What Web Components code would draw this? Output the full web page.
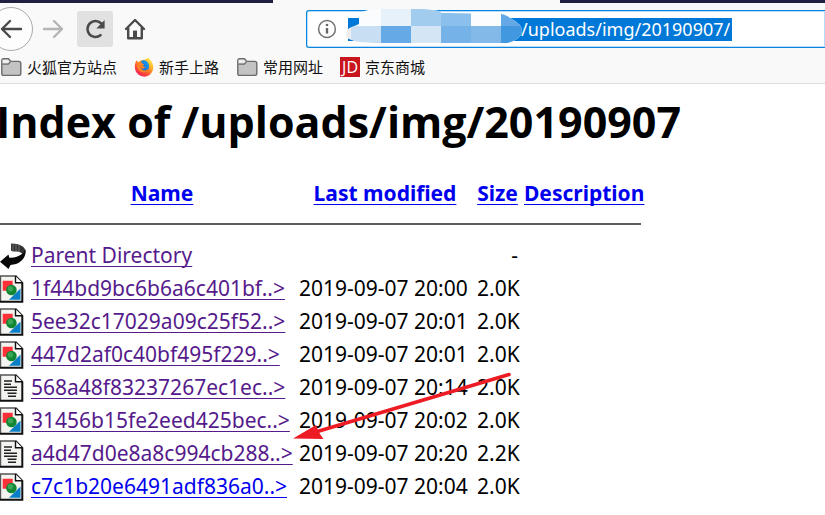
<!DOCTYPE html>
<html lang="zh-CN">
<head>
<meta charset="utf-8">
<title>Index of /uploads/img/20190907</title>
<style>
body{margin:0;background:#fff;color:#000;font-family:"Noto Sans","Noto Sans CJK SC",sans-serif;overflow-x:hidden}
</style>
</head>
<body>
<browser-chrome></browser-chrome>
<directory-index path="/uploads/img/20190907"></directory-index>
<script>
const define = (name, html, setup) => customElements.define(name, class extends HTMLElement {
  constructor() {
    super();
    this.attachShadow({mode: 'open'}).innerHTML = html;
  }
  connectedCallback() { if (setup) setup(this, this.shadowRoot); }
});

const icons = {
  back: '<svg width="24" height="24" viewBox="0 0 24 24" fill="none" stroke="#4a4a4a" stroke-width="2.4" stroke-linecap="round" stroke-linejoin="round"><path d="M22 12H3M11 4L3 12l8 8"/></svg>',
  forward: '<svg width="24" height="24" viewBox="0 0 24 24" fill="none" stroke="#b5b5b5" stroke-width="2.4" stroke-linecap="round" stroke-linejoin="round"><path d="M3 12h18M13 4l8 8-8 8"/></svg>',
  reload: '<svg width="24" height="24" viewBox="0 0 24 24" fill="none" stroke="#4a4a4a" stroke-width="2.6" stroke-linecap="round"><path d="M17.5 18.2A8 8 0 1 1 18 6.2"/><path d="M21.6 3v8.4h-8.2z" fill="#4a4a4a" stroke="none"/></svg>',
  home: '<svg width="24" height="24" viewBox="0 0 24 24" fill="none" stroke="#4a4a4a" stroke-width="2.4" stroke-linecap="round" stroke-linejoin="round"><path d="M3 12l9-9 9 9M5.2 11v10.2h13.6V11"/><path d="M10 21v-7.4h4V21z" fill="#4a4a4a" stroke="none"/></svg>',
  info: '<svg width="20" height="20" viewBox="0 0 20 20"><circle cx="10" cy="10" r="8.4" fill="none" stroke="#737373" stroke-width="1.5"/><circle cx="10" cy="6" r="1.3" fill="#666"/><path d="M10 9v5.6" stroke="#666" stroke-width="2.4"/></svg>',
  folder: '<svg width="22" height="20" viewBox="0 0 22 20"><path d="M1.8 16.5V3.6Q1.8 1.8 3.6 1.8h4.8l2.4 2.6h8q2 0 2 2v10.200q0 1.800-1.800 1.800H3.600q-1.800 0-1.800-1.900z" fill="#c3c3c3" stroke="#6b6b6b" stroke-width="1.4"/><path d="M2.600 6.200V2.700h5.300l1.700 1.700-1.700 1.800z" fill="#eee"/><path d="M2.500 7.200h5.800l2-2.200" fill="none" stroke="#6b6b6b" stroke-width="1.200"/></svg>',
  firefox: '<svg width="20" height="20" viewBox="0 0 20 20"><defs><linearGradient id="f" x1=".9" y1="0" x2=".2" y2="1"><stop offset="0" stop-color="#fff44f"/><stop offset=".35" stop-color="#ffb52b"/><stop offset=".65" stop-color="#ff5a30"/><stop offset="1" stop-color="#ef1260"/></linearGradient><linearGradient id="b" x1="0" y1="1" x2="1" y2="0"><stop offset="0" stop-color="#0759c9"/><stop offset="1" stop-color="#24a7f2"/></linearGradient></defs><path d="M2.500 3.300l1.700 2C7 2.300 9 3 11 2.400L14.500.7c1 1.500 1.700 2.300 2.800 3.500 3.300 5 2.200 9.800-.8 12.800-4 4-10 3.200-13.300-.7C.1 12.700.2 7.500 2.500 3.300z" fill="url(#f)"/><path d="M7 4c3.500-1.800 7.200.2 8 4 .6 4-2 6.700-5 6.600-3-.1-4.600-2.100-4.400-4.400 1.600 1 3.500 1 4.600-.7-1.600 0-1.700-1.100-.5-2.200C8.500 6.800 7.100 5.900 7 4z" fill="url(#b)"/><path d="M3.300 6c2-1.100 4.300-.5 5.200 1.100l1.600.4c-.1 1-1.800 1.300-2 2 .5 1 2.500.6 3.600.4-.9 1.900-3.500 2.300-4.700 1.200.8 3 6.200 3 8.500.2-1.200 5-8.800 5.700-11.400.8C2.900 10 2.800 7.600 3.300 6z" fill="#ff8126"/></svg>'
};

const page = '<path d="M0 .5h16.500l6.500 6.500v20.500H0z" fill="#f3f3f0"/><path d="M.5 27V1H16" fill="none" stroke="#555" stroke-width="1.400"/><path d="M15.500 1l6.800 6.800v19H0" fill="none" stroke="#111" stroke-width="2"/><path d="M15.500 1v6.800h6.800" fill="#fff" stroke="#111" stroke-width="1.400"/>';
const files = {
  image: `<svg width="24" height="28" viewBox="0 0 24 28">${page}<path d="M2.700 5.700h10v10h-10z" fill="#ff3038"/><path d="M20.500 13.500v11.300H9z" fill="#087fc4"/><circle cx="11.400" cy="15" r="5.300" fill="#138633"/><circle cx="10.500" cy="13.700" r="2.700" fill="#38a557"/></svg>`,
  text: `<svg width="24" height="28" viewBox="0 0 24 28">${page}<path d="M4 7h8M4 10.300h7M4 13.300h13M4 16.300h13M7.500 19.300h9M8 22.300h8" stroke="#222" stroke-width="1.500"/></svg>`,
  parent: '<svg width="26" height="28" viewBox="0 0 26 28"><path d="M11 1.500c9 .2 14 3 14.500 7.500l-3 3c-2-2.500-5-2.600-9-2.500l-2.500-.8z" fill="#333"/><path d="M13 1v9M16 2v8M19 3v7" stroke="#999" stroke-width=".6"/><path d="M25.700 7.500c.6 8-5 15-15.200 15.400l-2 4.100L0 19.800l8.500-7.200.8 3.200c7.500.5 13.400-3.300 16.400-8.300z" fill="#080808"/></svg>'
};

define('ui-icon', '<style>:host{display:inline-flex;flex:none}svg{display:block}</style>', (el, root) => {
  root.innerHTML += icons[el.getAttribute('name')];
});
define('file-icon', '<style>:host{display:block;height:28px}svg{display:block}</style>', (el, root) => {
  root.innerHTML += files[el.getAttribute('kind')];
});

define('tool-button', `<style>
:host{display:block;flex:none}
button{display:grid;place-items:center;width:36px;height:36px;padding:0;border:0;border-radius:3px;background:none}
:host([active]) button{background:#e1e1e1}
:host([round]) button{width:44px;height:44px;border:1px solid #aaa;border-radius:50%;background:#fdfdfd}
</style><button type="button"><slot></slot></button>`, (el, root) => {
  root.querySelector('button').setAttribute('aria-label', el.getAttribute('label'));
});

define('address-bar', `<style>
:host{display:flex;align-items:center;flex:1;box-sizing:border-box;height:38px;padding-left:10px;background:#fff;border:1px solid #0a84e0;border-right:0;border-radius:3px 0 0 3px;box-shadow:inset 0 0 0 1px #b8dbf7;position:relative}
input{field-sizing:content;margin-left:11px;box-sizing:border-box;height:23px;padding:0 2px 0 173px;border:0;outline:0;background:#0078d7;color:#fff;font:18px/23px "Noto Sans",sans-serif}
.mask{position:absolute;left:38px;top:-2px}
</style><ui-icon name="info"></ui-icon><input type="text" aria-label="Address" value="/uploads/img/20190907/">
<svg class="mask" width="180" height="36" viewBox="0 0 180 36" aria-hidden="true">
<defs><clipPath id="m"><path d="M14 9C14 3 20 0 37 0h36c12 0 20 2 30 4l53 1c6 1 9 4 14 7 4 3 7 5 7 10-1 8-10 11-15 12H38c-12 0-24 0-31-3C-1 29-1 21 7 18l7-3z"/></clipPath></defs>
<g clip-path="url(#m)"><path fill="#fafcfd" d="M0 0h180v36H0z"/><path fill="#e7f1fa" d="M36 0h30v17H36z"/><path fill="#a2ccee" d="M66 0h30v17H66z"/><path fill="#8cc0ec" d="M96 4h30v13H96z"/><path fill="#c8def3" d="M6 17h30v19H6z"/><path fill="#ededed" d="M0 17h6v19H0z"/><path fill="#65a9e6" d="M36 17h30v19H36z"/><path fill="#d4e6f5" d="M66 17h30v19H66z"/><path fill="#74b2e8" d="M96 17h30v19H96z"/><path fill="#82b9e9" d="M126 17h30v19h-30z"/><path fill="#64a9e5" d="M156 0h24v17h-24z"/><path fill="#4298df" d="M156 17h24v19h-24z"/></g></svg>`);

define('bookmark-link', `<style>
:host{display:block;flex:none}
a{display:flex;align-items:center;gap:5px;color:#111;text-decoration:none;font-size:15px;line-height:22px}
</style><a href="#"><slot name="icon"></slot><span><slot></slot></span></a>`);

define('jd-badge', `<style>:host{display:block;box-sizing:border-box;width:20px;height:20px;background:#c9151e;color:#fff;text-align:center;font:16px/20px "Open Sans",sans-serif}</style>JD`);

define('browser-chrome', `<style>
:host{display:block;background:#f9f9fa;border-bottom:1px solid #dcdcdc}
.tabs{display:grid;grid-template-columns:273px 287px 1fr;height:3px}
.tabs span:nth-child(odd){background:#1d2040}
.tools{display:flex;align-items:center;height:52px}
tool-button[round]{margin-left:-11px}
tool-button[label=Forward]{margin-left:2px}
tool-button[active]{margin-left:6px}
tool-button[label=Home]{margin-left:4px}
address-bar{margin-left:153px}
nav{display:flex;align-items:center;height:24px;padding-bottom:4px}
bookmark-link{margin-right:17px}
</style>
<div class="tabs"><span></span><span></span><span></span></div>
<div class="tools">
<tool-button round label="Back"><ui-icon name="back"></ui-icon></tool-button>
<tool-button label="Forward"><ui-icon name="forward"></ui-icon></tool-button>
<tool-button active label="Reload"><ui-icon name="reload"></ui-icon></tool-button>
<tool-button label="Home"><ui-icon name="home"></ui-icon></tool-button>
<address-bar></address-bar>
</div>
<nav>
<bookmark-link><ui-icon slot="icon" name="folder"></ui-icon>火狐官方站点</bookmark-link>
<bookmark-link><ui-icon slot="icon" name="firefox"></ui-icon>新手上路</bookmark-link>
<bookmark-link><ui-icon slot="icon" name="folder"></ui-icon>常用网址</bookmark-link>
<bookmark-link><jd-badge slot="icon"></jd-badge>京东商城</bookmark-link>
</nav>`);

const rows = [
  ['image', '1f44bd9bc6b6a6c401bf..>', '2019-09-07 20:00', '2.0K'],
  ['image', '5ee32c17029a09c25f52..>', '2019-09-07 20:01', '2.0K'],
  ['image', '447d2af0c40bf495f229..>', '2019-09-07 20:01', '2.0K'],
  ['text', '568a48f83237267ec1ec..>', '2019-09-07 20:14', '2.0K'],
  ['image', '31456b15fe2eed425bec..>', '2019-09-07 20:02', '2.0K'],
  ['text', 'a4d47d0e8a8c994cb288..>', '2019-09-07 20:20', '2.2K'],
  ['image', 'c7c1b20e6491adf836a0..>', '2019-09-07 20:04', '2.0K', 'new']
];

define('directory-index', `<style>
:host{display:block;position:relative}
h1{margin:0 0 0 -4px;padding-top:8px;font:bold 43px/60px "Open Sans","Noto Sans",sans-serif;white-space:nowrap}
table{table-layout:fixed;width:641px;margin-top:25px;border-collapse:collapse;font-size:21px;line-height:33px}
th,td{padding:0 6px 0 0;height:33px;text-align:left;white-space:nowrap;vertical-align:middle}
th{text-align:center}
th:last-child{padding:0}
td:nth-child(4){text-align:right}
tr.rule td{height:16px;padding:13px 0 0;vertical-align:top}
hr{margin:0;border:0;height:2px;background:#5c5c5c}
a{color:#551a8b;text-decoration:underline 1px;text-underline-offset:3px;text-decoration-skip-ink:none}
th a,a.new{color:#00e}
.arrow{position:absolute;left:290px;top:287px}
</style>
<h1></h1>
<table><colgroup><col style="width:31px"><col style="width:268px"><col style="width:178px"><col style="width:47px"><col style="width:117px"></colgroup>
<thead><tr><th></th><th><a href="#">Name</a></th><th><a href="#">Last modified</a></th><th><a href="#">Size</a></th><th><a href="#">Description</a></th></tr>
<tr class="rule"><td colspan="5"><hr></td></tr></thead>
<tbody><tr><td><file-icon kind="parent"></file-icon></td><td><a href="#">Parent Directory</a></td><td></td><td>-</td><td></td></tr></tbody></table>
<svg class="arrow" width="224" height="72" viewBox="0 0 224 72" aria-hidden="true"><path d="M219 3.500L24 61.500" stroke="#ed1c24" stroke-width="3.600" stroke-linecap="round"/><path d="M3 67.500L26 54l3 7.500 4.500 6.500z" fill="#ed1c24"/></svg>`, (el, root) => {
  root.querySelector('h1').textContent = 'Index of ' + el.getAttribute('path');
  root.querySelector('tbody').insertAdjacentHTML('beforeend', rows.map(([kind, name, date, size, cls = '']) =>
    `<tr><td><file-icon kind="${kind}"></file-icon></td><td><a href="#" class="${cls}">${name.replace('>', '&gt;')}</a></td><td>${date}</td><td>${size}</td><td></td></tr>`).join(''));
});
</script>
</body>
</html>
